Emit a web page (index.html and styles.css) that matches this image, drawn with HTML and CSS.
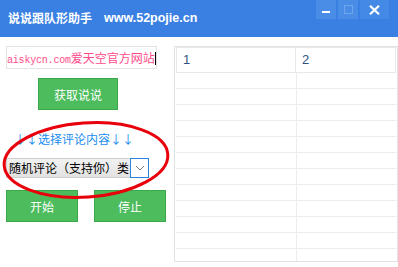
FILE: index.html
```html
<!DOCTYPE html>
<html lang="zh-CN">
<head>
  <meta charset="UTF-8" />
  <title>说说跟队形助手</title>
  <link rel="stylesheet" href="styles.css">
</head>
<body>
  <div class="window">
    <div class="titlebar">
      <span class="title">说说跟队形助手</span>
      <span class="site">www.52pojie.cn</span>
      <div class="controls">
        <span class="ctl ctl-min"><i class="dash"></i></span>
        <span class="ctl ctl-max"><i class="box"></i></span>
        <span class="ctl ctl-close">
          <svg width="11" height="10" viewBox="0 0 11 10">
            <path d="M1 0.8 L10 9.2 M10 0.8 L1 9.2" stroke="#fff" stroke-width="2.2" />
          </svg>
        </span>
      </div>
    </div>

    <div class="main">
      <div class="left">
        <div class="textbox"><span class="mono">aiskycn.com</span>爱天空官方网站<span class="caret"></span></div>
        <button class="btn btn-fetch">获取说说</button>
        <div class="pick"><span class="ar">↓</span><span class="ar">↓</span>选择评论内容<span class="ar">↓</span><span class="ar">↓</span></div>
        <div class="select">
          <span class="select-text">随机评论（支持你）类</span>
          <span class="select-arrow">
            <svg width="10" height="6" viewBox="0 0 10 6">
              <path d="M1 1 L5 5 L9 1" fill="none" stroke="#777" stroke-width="1" />
            </svg>
          </span>
        </div>
        <div class="actions">
          <button class="btn">开始</button>
          <button class="btn">停止</button>
        </div>
      </div>

      <div class="grid">
        <div class="head">
          <div class="c1">1</div>
          <div class="c2">2</div>
        </div>
        <div class="row"><div class="c1"></div><div class="c2"></div></div>
        <div class="row"><div class="c1"></div><div class="c2"></div></div>
        <div class="row"><div class="c1"></div><div class="c2"></div></div>
        <div class="row"><div class="c1"></div><div class="c2"></div></div>
        <div class="row"><div class="c1"></div><div class="c2"></div></div>
        <div class="row"><div class="c1"></div><div class="c2"></div></div>
        <div class="row"><div class="c1"></div><div class="c2"></div></div>
        <div class="row"><div class="c1"></div><div class="c2"></div></div>
        <div class="row"><div class="c1"></div><div class="c2"></div></div>
        <div class="row"><div class="c1"></div><div class="c2"></div></div>
        <div class="row"><div class="c1"></div><div class="c2"></div></div>
        <div class="row"><div class="c1"></div><div class="c2"></div></div>
      </div>
    </div>

    <svg class="mark" width="172" height="90" viewBox="0 0 172 90">
      <ellipse cx="86" cy="45" rx="82" ry="37" transform="rotate(-4 86 45)"
               fill="none" stroke="#e8000b" stroke-width="3" />
    </svg>
  </div>
</body>
</html>
```

FILE: styles.css
```css
body {
  margin: 0;
  background: #fff;
  font-family: "Noto Sans CJK SC", "Liberation Sans", sans-serif;
}
.window {
  position: relative;
  width: 398px;
  height: 267px;
  overflow: hidden;
  background: #fff;
}

/* title bar */
.titlebar {
  position: relative;
  height: 37px;
  background: #3a80e2;
  color: #fff;
  display: flex;
  align-items: center;
  padding: 0 0 2px 8px;
  box-sizing: border-box;
}
.title {
  font-size: 12px;
  font-weight: 700;
}
.site {
  margin-left: 12px;
  font-family: "Liberation Sans", sans-serif;
  font-size: 12.5px;
  font-weight: 700;
}
.controls {
  position: absolute;
  top: 0;
  right: 9px;
  display: flex;
  gap: 2px;
}
.ctl {
  width: 20px;
  height: 19px;
  background: #4a8de7;
  display: flex;
  align-items: center;
  justify-content: center;
}
.ctl-close {
  width: 29px;
  background: #4589e6;
}
.dash {
  width: 8px;
  height: 2px;
  background: #fff;
  margin-top: 4px;
}
.box {
  width: 7px;
  height: 7px;
  border: 1px solid #6ea5ee;
}

/* body */
.main {
  display: flex;
  padding-top: 9px;
}
.left {
  width: 174px;
  padding-left: 6px;
  box-sizing: border-box;
}
.textbox {
  width: 151px;
  height: 23px;
  box-sizing: border-box;
  border: 1px solid #e3e3e3;
  line-height: 21px;
  white-space: nowrap;
  overflow: hidden;
  font-size: 12px;
  color: #ff4b8a;
}
.mono {
  font-family: "Liberation Mono", monospace;
  font-size: 10px;
  letter-spacing: -0.2px;
}
.caret {
  display: inline-block;
  width: 1px;
  height: 13px;
  background: #000;
  vertical-align: -2px;
}
.btn {
  display: block;
  width: 72px;
  height: 32px;
  padding: 0;
  background: #4cbc5c;
  border: 1px solid #3caa49;
  color: #fff;
  font-family: "Noto Sans CJK SC", sans-serif;
  font-size: 12px;
}
.btn-fetch {
  width: 80px;
  margin: 9px 0 0 32px;
}
.pick {
  margin-top: 21px;
  padding-left: 8px;
  height: 16px;
  line-height: 16px;
  font-size: 12px;
  color: #1a8cf0;
  white-space: nowrap;
}
.ar {
  display: inline-block;
  width: 12px;
  text-align: center;
}
.select {
  margin-top: 11px;
  width: 143px;
  height: 20px;
  display: flex;
  box-sizing: border-box;
  border: 1px solid #cfcfcf;
}
.select-text {
  flex: 1;
  padding-left: 2px;
  font-size: 12px;
  line-height: 18px;
  color: #000;
  white-space: nowrap;
  overflow: hidden;
  background: linear-gradient(#f2f2f2, #e2e2e2);
}
.select-arrow {
  width: 17px;
  margin: -1px -1px -1px 0;
  border: 1px solid #2b83dc;
  background: #fff;
  display: flex;
  align-items: center;
  justify-content: center;
}
.actions {
  display: flex;
  gap: 16px;
  margin-top: 12px;
}

/* list grid */
.grid {
  width: 224px;
  height: 216px;
  box-sizing: border-box;
  border: 1px solid #e2e2e2;
  padding: 0 1px;
  overflow: hidden;
}
.head {
  display: flex;
  height: 26px;
  box-sizing: border-box;
  border: 1px solid #e8e8e8;
  font-family: "Liberation Sans", sans-serif;
  font-size: 13px;
  line-height: 24px;
  color: #2f5282;
}
.head .c1 {
  width: 119px;
  padding-left: 6px;
  box-sizing: border-box;
  border-right: 1px solid #e8e8e8;
}
.head .c2 {
  flex: 1;
  padding-left: 6px;
}
.row {
  display: flex;
  height: 16px;
  box-sizing: border-box;
  border-bottom: 1px solid #ececec;
}
.row .c1 {
  width: 120px;
  border-right: 1px solid #ececec;
}

.mark {
  position: absolute;
  left: 0;
  top: 115px;
}
```
